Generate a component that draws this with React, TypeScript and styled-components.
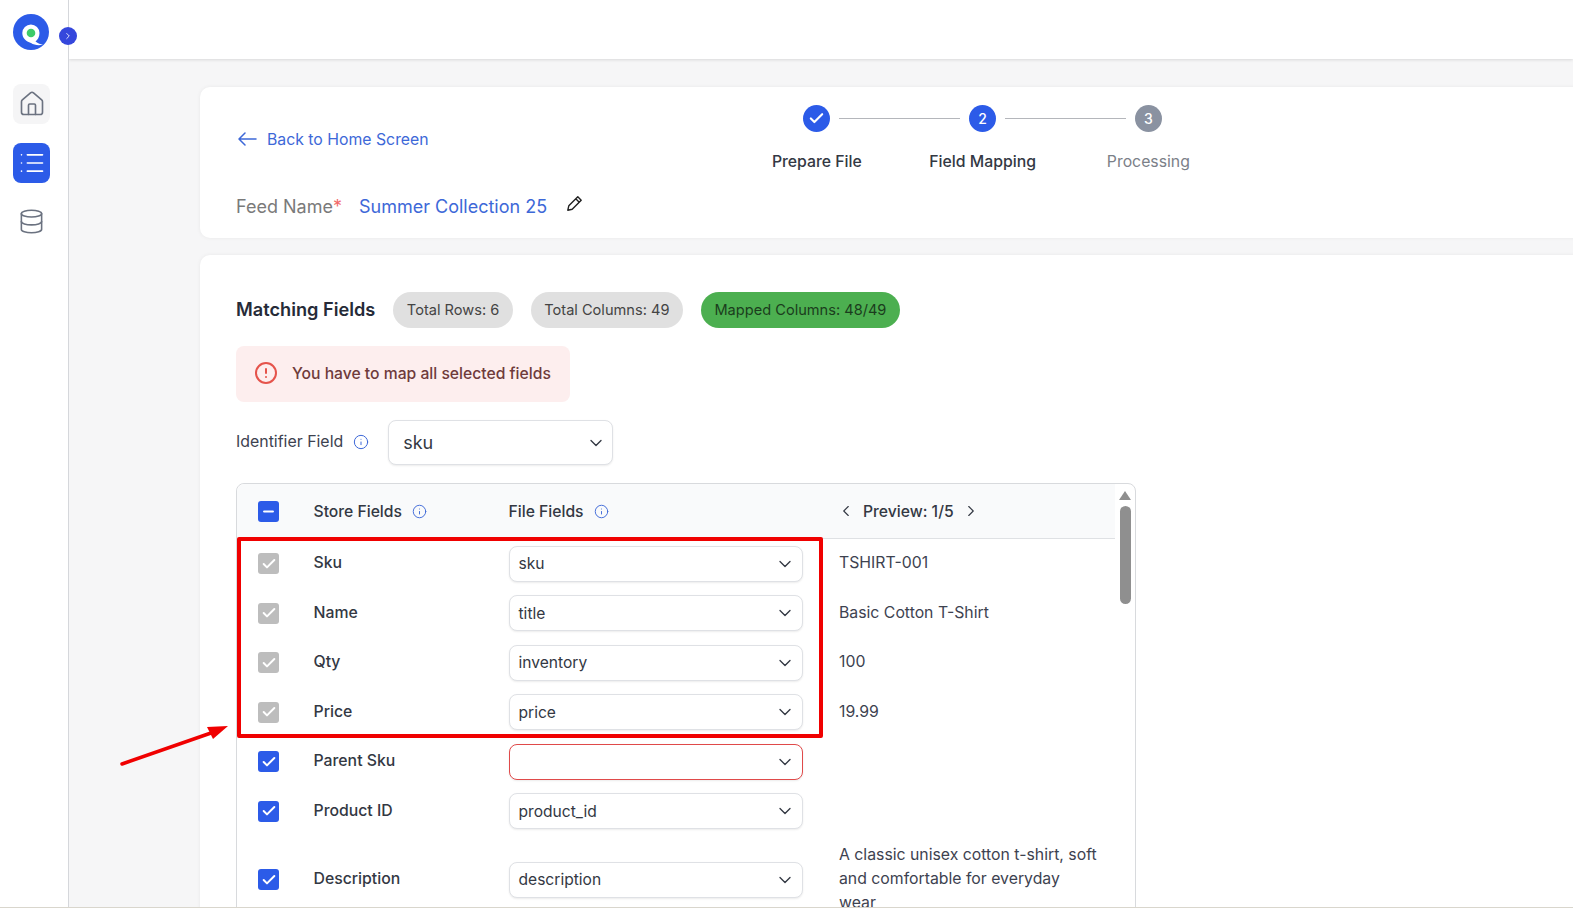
import styled, { createGlobalStyle } from 'styled-components';
import { Check, ChevronDown, ChevronLeft, ChevronRight, CircleAlert, Database, House, Info, List, Minus } from 'lucide-react';

const GlobalStyle = createGlobalStyle`
  html, body { margin: 0; padding: 0; height: 100%; background: #fff; overflow: hidden; }
  body { font-family: Inter, "Noto Sans", sans-serif; color: #2f3440; }
  * { box-sizing: border-box; }
`;

// --- LAYOUT ---
const Shell = styled.div`
  position: relative;
  display: flex;
  height: 908px;
  overflow: hidden;
  border-bottom: 1px solid #d9d6cd;
`;

const Sidebar = styled.aside`
  position: relative;
  flex: 0 0 69px;
  display: flex;
  flex-direction: column;
  align-items: flex-start;
  padding: 14px 0 0 13px;
  background: #fff;
  border-right: 1px solid #d5d7db;
`;

const Logo = styled.svg`
  width: 36px;
  height: 36px;
  margin-bottom: 34px;
`;

const ToggleButton = styled.button`
  position: absolute;
  top: 27px;
  left: 59px;
  width: 18px;
  height: 18px;
  padding: 0;
  display: flex;
  align-items: center;
  justify-content: center;
  border: none;
  border-radius: 50%;
  background: #3547dc;
  color: #fff;
  z-index: 2;
`;

const NavItem = styled.div<{ $active?: boolean; $soft?: boolean }>`
  width: 37px;
  height: 40px;
  margin-bottom: 19px;
  display: flex;
  align-items: center;
  justify-content: center;
  border-radius: 8px;
  background: ${p => (p.$active ? '#2c5be8' : p.$soft ? '#f5f5f6' : 'transparent')};
  color: ${p => (p.$active ? '#fff' : '#6b7280')};
`;

const DatabaseItem = styled(NavItem)`
  margin-top: -1px;
`;

const Main = styled.main`
  flex: 1;
  min-width: 0;
  display: flex;
  flex-direction: column;
  background: #f6f6f7;
`;

const TopBar = styled.header`
  flex: 0 0 59px;
  background: #fff;
  box-shadow: 0 1px 3px rgba(0, 0, 0, 0.12);
`;

const Content = styled.div`
  flex: 1;
  padding: 28px 0 0 131px;
  display: flex;
  flex-direction: column;
  gap: 17px;
  overflow: hidden;
`;

const Card = styled.section`
  width: 1500px;
  flex-shrink: 0;
  background: #fff;
  border-radius: 10px;
  box-shadow: 0 0 4px rgba(0, 0, 0, 0.06);
`;

const TopCard = styled(Card)`
  padding: 18px 36px 20px;
`;

const TopRow = styled.div`
  display: flex;
  align-items: center;
`;

const BackLink = styled.a`
  flex: 0 0 498px;
  display: flex;
  align-items: center;
  gap: 10px;
  margin-top: 1px;
  padding-left: 2px;
  color: #3d68d8;
  font-size: 15.8px;
`;

const BackArrow = styled.svg`
  width: 19px;
  height: 14px;
`;

const Stepper = styled.div`
  display: flex;
`;

const Step = styled.div`
  position: relative;
  width: 165.75px;
  display: flex;
  flex-direction: column;
  align-items: center;
  gap: 20px;

  &:not(:last-child)::after {
    content: '';
    position: absolute;
    top: 13px;
    left: calc(50% + 22px);
    width: 121px;
    height: 1px;
    background: #b4b6bb;
  }
`;

const StepDot = styled.div<{ $muted?: boolean }>`
  width: 27px;
  height: 27px;
  display: flex;
  align-items: center;
  justify-content: center;
  border-radius: 50%;
  background: ${p => (p.$muted ? '#8a92a1' : '#2c5be8')};
  color: #fff;
  font-size: 14px;
  font-weight: 500;
`;

const StepLabel = styled.div<{ $muted?: boolean }>`
  font-size: 15.8px;
  line-height: 20px;
  font-weight: ${p => (p.$muted ? 400 : 500)};
  color: ${p => (p.$muted ? '#7b8088' : '#333843')};
`;

const FeedRow = styled.div`
  display: flex;
  align-items: center;
  margin-top: 22px;
  height: 24px;
  font-size: 18px;
`;

const FeedLabel = styled.span`
  color: #7a7a7a;
  margin-right: 17px;

  em {
    color: #f26a6a;
    font-style: normal;
  }
`;

const FeedName = styled.span`
  color: #3d68d8;
  margin-right: 19px;
`;

const EditIcon = styled.svg`
  width: 17px;
  height: 17px;
  margin-top: -5px;
`;

const MatchCard = styled(Card)`
  padding: 37px 36px 0;
`;

const SummaryRow = styled.div`
  display: flex;
  align-items: center;
`;

const SectionTitle = styled.h2`
  margin: -2px 18px 0 0;
  font-size: 18.2px;
  font-weight: 600;
  color: #262b38;
`;

const Pill = styled.span<{ $success?: boolean }>`
  height: 36px;
  display: flex;
  align-items: center;
  padding: 0 13.5px 1px;
  margin-right: 18px;
  border-radius: 18px;
  font-size: 14.6px;
  background: ${p => (p.$success ? '#4caf50' : '#e0e0e0')};
  color: ${p => (p.$success ? '#1b3d1d' : '#444')};
`;

const AlertBox = styled.div`
  width: 334px;
  height: 56px;
  margin-top: 18px;
  display: flex;
  align-items: center;
  gap: 14px;
  padding: 0 0 2px 18px;
  border-radius: 8px;
  background: #fdeeee;
  color: #6f3b3b;
  font-size: 15.7px;
  font-weight: 500;
`;

const AlertIcon = styled.span`
  display: flex;
  color: #e5534b;
`;

const IdentifierRow = styled.div`
  display: flex;
  align-items: center;
  margin-top: 18px;
  color: #3d4250;
`;

const IdentifierLabel = styled.span`
  margin-top: -3px;
  font-size: 15.9px;
`;

const InfoMark = styled.span`
  display: inline-flex;
  margin-left: 10px;
  color: #3d68d8;
`;

const IdentifierInfo = styled(InfoMark)`
  margin-top: -2px;
`;

const SelectBox = styled.div<{ $error?: boolean; $large?: boolean }>`
  width: ${p => (p.$large ? '225px' : '294px')};
  height: ${p => (p.$large ? '45px' : '36px')};
  display: flex;
  align-items: center;
  padding: ${p => (p.$large ? '0 6px 0 14px' : '0 7px 0 9px')};
  border: 1px solid ${p => (p.$error ? '#e04a4a' : '#dfe1e5')};
  border-radius: 8px;
  background: #fff;
  box-shadow: 0 1px 2px rgba(0, 0, 0, 0.08);
  font-size: ${p => (p.$large ? '18px' : '15.6px')};
  color: #333843;

  svg {
    margin-left: auto;
  }
`;

const IdentifierSelect = styled(SelectBox)`
  margin-left: 19px;
`;

const TableFrame = styled.div`
  position: relative;
  width: 900px;
  height: 480px;
  margin-top: 18px;
  display: flex;
  border: 1px solid #d8dadd;
  border-radius: 8px 8px 0 0;
`;

const TableBody = styled.div`
  flex: 1;
  min-width: 0;
`;

const Row = styled.div<{ $tall?: boolean }>`
  display: grid;
  grid-template-columns: 76.5px 195px 330.500px 1fr;
  align-items: center;
  height: ${p => (p.$tall ? '87px' : '49.5px')};
  font-size: 15.8px;
`;

const HeaderRow = styled(Row)`
  height: 55px;
  background: #f9fafb;
  border-bottom: 1px solid #dfe1e4;
  border-radius: 8px 0 0 0;
  font-size: 15.7px;
  font-weight: 500;
`;

const CheckCell = styled.div`
  padding-left: 21px;
  display: flex;
`;

const CheckBox = styled.span<{ $disabled?: boolean }>`
  width: 21px;
  height: 21px;
  display: flex;
  align-items: center;
  justify-content: center;
  border-radius: 3px;
  background: ${p => (p.$disabled ? '#bdbdbd' : '#2c5be8')};
  color: #fff;
`;

const FieldName = styled.div`
  margin-top: -2px;
  font-weight: 450;
  color: #333843;
`;

const HeadLabel = styled.div`
  display: flex;
  align-items: center;
  color: #333843;
`;

const PreviewHead = styled.div`
  display: flex;
  align-items: center;
  gap: 8px;
  margin-left: -2px;
  color: #333843;
`;

const PreviewText = styled.div`
  margin-top: -1px;
  padding-right: 15px;
  line-height: 24px;
  color: #3d4250;
`;

const ScrollRail = styled.div`
  flex: 0 0 20px;
  display: flex;
  flex-direction: column;
  align-items: center;
  padding-top: 7px;
`;

const ScrollArrow = styled.div`
  width: 0;
  height: 0;
  margin-bottom: 6px;
  border-left: 6px solid transparent;
  border-right: 6px solid transparent;
  border-bottom: 9px solid #8f8f8f;
`;

const ScrollThumb = styled.div`
  width: 11px;
  height: 98px;
  border-radius: 6px;
  background: #8f8f8f;
`;

// annotation drawn on top of the screenshot
const RedOutline = styled.div`
  position: absolute;
  top: 53px;
  left: 0;
  width: 586px;
  height: 201px;
  border: 4px solid #f00000;
  border-radius: 2px;
  pointer-events: none;
`;

const ArrowMark = styled.svg`
  position: absolute;
  left: 115px;
  top: 715px;
  width: 125px;
  height: 60px;
`;

const rows = [
  { name: 'Sku', value: 'sku', preview: 'TSHIRT-001', locked: true },
  { name: 'Name', value: 'title', preview: 'Basic Cotton T-Shirt', locked: true },
  { name: 'Qty', value: 'inventory', preview: '100', locked: true },
  { name: 'Price', value: 'price', preview: '19.99', locked: true },
  { name: 'Parent Sku', value: '', preview: '', error: true },
  { name: 'Product ID', value: 'product_id', preview: '' },
  {
    name: 'Description',
    value: 'description',
    preview: 'A classic unisex cotton t-shirt, soft and comfortable for everyday wear',
    tall: true,
  },
];

export default function App() {
  return (
    <>
      <GlobalStyle />
      <Shell>
        <Sidebar>
          <Logo viewBox="0 0 36 36">
            <circle cx="18" cy="18" r="18" fill="#2c5be8" />
            <path
              d="M9.3 19a8.600 8.600 0 0 1 17.200 0c0 4-2 7-4 8.500 2.500 2 5 2.800 7.500 3-4 1.300-9 .5-12-1.500-5-1.500-8.700-5-8.700-10z"
              fill="#fff"
            />
            <circle cx="18" cy="19" r="4.300" fill="#3ecb6a" />
          </Logo>
          <ToggleButton aria-label="Expand">
            <ChevronRight size={10} strokeWidth={2} />
          </ToggleButton>
          <NavItem $soft>
            <House size={28} strokeWidth={1.4} />
          </NavItem>
          <NavItem $active>
            <List size={28} strokeWidth={1.4} />
          </NavItem>
          <DatabaseItem>
            <Database size={27} strokeWidth={1.4} />
          </DatabaseItem>
        </Sidebar>
        <Main>
          <TopBar />
          <Content>
            <TopCard>
              <TopRow>
                <BackLink>
                  <BackArrow viewBox="0 0 19 14" fill="none" stroke="currentColor" strokeWidth="1.5" strokeLinecap="round" strokeLinejoin="round">
                    <path d="M18 7H1.500M7 1L1 7l6 6" />
                  </BackArrow>
                  Back to Home Screen
                </BackLink>
                <Stepper>
                  <Step>
                    <StepDot>
                      <Check size={17} strokeWidth={3} />
                    </StepDot>
                    <StepLabel>Prepare File</StepLabel>
                  </Step>
                  <Step>
                    <StepDot>2</StepDot>
                    <StepLabel>Field Mapping</StepLabel>
                  </Step>
                  <Step>
                    <StepDot $muted>3</StepDot>
                    <StepLabel $muted>Processing</StepLabel>
                  </Step>
                </Stepper>
              </TopRow>
              <FeedRow>
                <FeedLabel>
                  Feed Name<em>*</em>
                </FeedLabel>
                <FeedName>Summer Collection 25</FeedName>
                <EditIcon viewBox="0 0 17 17" fill="none" stroke="#222" strokeWidth="1.4" strokeLinejoin="round">
                  <path d="M11.800 1.800l3.400 3.400-9 9-4.400 1 1-4.400zM9.800 3.800l3.400 3.400" />
                </EditIcon>
              </FeedRow>
            </TopCard>

            <MatchCard>
              <SummaryRow>
                <SectionTitle>Matching Fields</SectionTitle>
                <Pill>Total Rows: 6</Pill>
                <Pill>Total Columns: 49</Pill>
                <Pill $success>Mapped Columns: 48/49</Pill>
              </SummaryRow>
              <AlertBox>
                <AlertIcon>
                  <CircleAlert size={24} strokeWidth={2} />
                </AlertIcon>
                You have to map all selected fields
              </AlertBox>
              <IdentifierRow>
                <IdentifierLabel>Identifier Field</IdentifierLabel>
                <IdentifierInfo>
                  <Info size={16} strokeWidth={1.5} />
                </IdentifierInfo>
                <IdentifierSelect $large>
                  sku
                  <ChevronDown size={20} strokeWidth={1.6} />
                </IdentifierSelect>
              </IdentifierRow>
              <TableFrame>
                <TableBody>
                  <HeaderRow>
                    <CheckCell>
                      <CheckBox>
                        <Minus size={15} strokeWidth={3.5} />
                      </CheckBox>
                    </CheckCell>
                    <HeadLabel>
                      Store Fields
                      <InfoMark>
                        <Info size={15} strokeWidth={1.5} />
                      </InfoMark>
                    </HeadLabel>
                    <HeadLabel>
                      File Fields
                      <InfoMark>
                        <Info size={15} strokeWidth={1.5} />
                      </InfoMark>
                    </HeadLabel>
                    <PreviewHead>
                      <ChevronLeft size={18} strokeWidth={1.5} />
                      Preview: 1/5
                      <ChevronRight size={18} strokeWidth={1.5} />
                    </PreviewHead>
                  </HeaderRow>
                  {rows.map(row => (
                    <Row key={row.name} $tall={row.tall}>
                      <CheckCell>
                        <CheckBox $disabled={row.locked}>
                          <Check size={16} strokeWidth={3} />
                        </CheckBox>
                      </CheckCell>
                      <FieldName>{row.name}</FieldName>
                      <SelectBox $error={row.error}>
                        {row.value}
                        <ChevronDown size={20} strokeWidth={1.6} />
                      </SelectBox>
                      <PreviewText>{row.preview}</PreviewText>
                    </Row>
                  ))}
                </TableBody>
                <ScrollRail>
                  <ScrollArrow />
                  <ScrollThumb />
                </ScrollRail>
                <RedOutline />
              </TableFrame>
            </MatchCard>
          </Content>
        </Main>
        <ArrowMark viewBox="0 0 125 60">
          <path d="M7 49 L96 18" stroke="#f00000" strokeWidth="3.500" strokeLinecap="round" fill="none" />
          <path d="M113 11 L92 12 L98 24 Z" fill="#f00000" />
        </ArrowMark>
      </Shell>
    </>
  );
}
